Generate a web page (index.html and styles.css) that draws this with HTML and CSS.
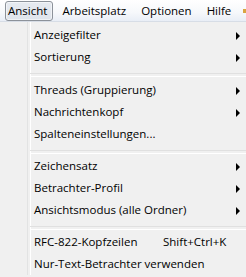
FILE: index.html
```html
<!DOCTYPE html>
<html lang="de">

<head>
    <meta charset="UTF-8">
    <title>Ansicht</title>
    <link rel="stylesheet" href="styles.css">
</head>

<body>
    <div class="menubar">
        <span class="bar-item active">Ansicht</span>
        <span class="bar-item">Arbeitsplatz</span>
        <span class="bar-item">Optionen</span>
        <span class="bar-item">Hilfe</span>
        <span class="bar-extra"></span>
    </div>

    <div class="menu">
        <div class="item sub">Anzeigefilter</div>
        <div class="item sub">Sortierung</div>
        <div class="sep wide"></div>
        <div class="item sub">Threads (Gruppierung)</div>
        <div class="item sub">Nachrichtenkopf</div>
        <div class="item">Spalteneinstellungen...</div>
        <div class="sep"></div>
        <div class="item sub">Zeichensatz</div>
        <div class="item sub">Betrachter-Profil</div>
        <div class="item sub">Ansichtsmodus (alle Ordner)</div>
        <div class="sep"></div>
        <div class="item"><span class="label">RFC-822-Kopfzeilen</span><span class="key">Shift+Ctrl+K</span></div>
        <div class="item">Nur-Text-Betrachter verwenden</div>
    </div>
</body>

</html>
```

FILE: styles.css
```css
* {
    margin: 0;
    padding: 0;
    box-sizing: border-box;
}

body {
    font-family: 'Open Sans', 'Noto Sans', sans-serif;
    font-size: 11.5px;
    color: #000;
    background: #f0f0f0;
    width: 246px;
    height: 277px;
    overflow: hidden;
}

/* Menueleiste oben */
.menubar {
    height: 22px;
    display: flex;
    align-items: center;
    padding-left: 5px;
    background: linear-gradient(#ffffff, #f6f8fb 60%, #e9eef6);
    border-bottom: 1px solid #d7dde6;
    white-space: nowrap;
}

.bar-item {
    height: 20px;
    line-height: 18px;
    padding: 0 5px 0 2px;
    margin-right: 6px;
    border: 1px solid transparent;
    border-radius: 3px;
}

.bar-item.active {
    border-color: #8c929a;
    background: linear-gradient(#e6eaf0, #dfe4eb);
    box-shadow: inset 0 0 0 1px rgba(255, 255, 255, 0.5);
}

.bar-extra {
    width: 4px;
    height: 4px;
    background: #d9a441;
}

/* Aufgeklapptes Menue */
.menu {
    position: relative;
    padding-top: 2px;
    background: #f0f0f0;
}

.menu:before {
    content: '';
    position: absolute;
    top: 0;
    bottom: 0;
    left: 27px;
    width: 2px;
    border-left: 1px solid #e2e3e3;
    border-right: 1px solid #ffffff;
}

.item {
    height: 22px;
    line-height: 22px;
    padding-left: 34px;
    position: relative;
    white-space: nowrap;
    display: flex;
}

.item.sub:after {
    content: '';
    position: absolute;
    right: 6px;
    top: 8px;
    border-left: 4px solid #000;
    border-top: 4px solid transparent;
    border-bottom: 4px solid transparent;
}

.label {
    width: 129px;
}

.sep {
    height: 10px;
    margin-left: 30px;
    position: relative;
}

.sep.wide {
    height: 11px;
}

.sep:after {
    content: '';
    position: absolute;
    left: 0;
    right: 0;
    top: 5px;
    height: 2px;
    border-top: 1px solid #e0e0e0;
    border-bottom: 1px solid #ffffff;
}
```
